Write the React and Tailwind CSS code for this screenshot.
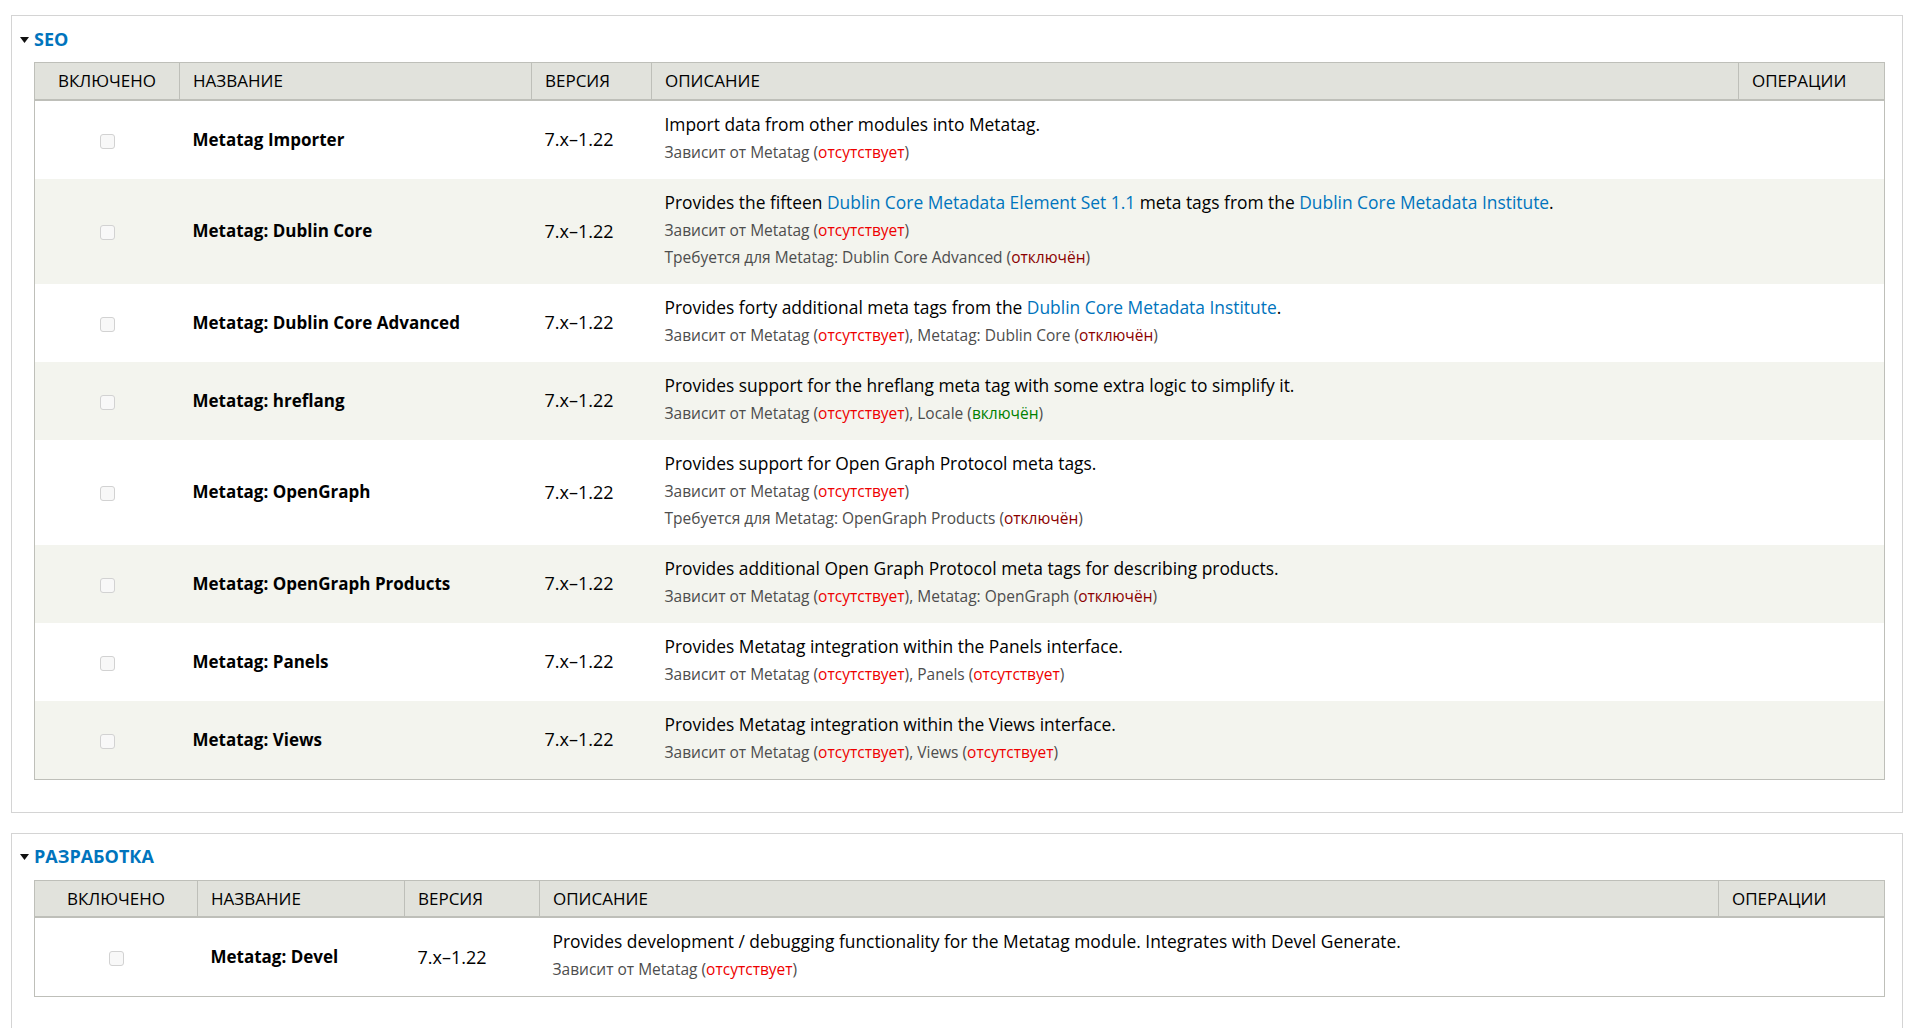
const RED = 'text-[#e00]';
const OFF = 'text-[#8b0000]';
const ON = 'text-[#008000]';

function A({ children }) {
  return <a className="text-[#0074bd]">{children}</a>;
}

function Dep({ label, state, cls }) {
  return (
    <>
      {label} (<span className={cls}>{state}</span>)
    </>
  );
}

const seo = [
  {
    name: 'Metatag Importer',
    desc: 'Import data from other modules into Metatag.',
    lines: [<Dep label="Зависит от Metatag" state="отсутствует" cls={RED} />],
  },
  {
    name: 'Metatag: Dublin Core',
    desc: (
      <>
        Provides the fifteen <A>Dublin Core Metadata Element Set 1.1</A> meta tags from the{' '}
        <A>Dublin Core Metadata Institute</A>.
      </>
    ),
    lines: [
      <Dep label="Зависит от Metatag" state="отсутствует" cls={RED} />,
      <Dep label="Требуется для Metatag: Dublin Core Advanced" state="отключён" cls={OFF} />,
    ],
  },
  {
    name: 'Metatag: Dublin Core Advanced',
    desc: (
      <>
        Provides forty additional meta tags from the <A>Dublin Core Metadata Institute</A>.
      </>
    ),
    lines: [
      <>
        <Dep label="Зависит от Metatag" state="отсутствует" cls={RED} />,{' '}
        <Dep label="Metatag: Dublin Core" state="отключён" cls={OFF} />
      </>,
    ],
  },
  {
    name: 'Metatag: hreflang',
    desc: 'Provides support for the hreflang meta tag with some extra logic to simplify it.',
    lines: [
      <>
        <Dep label="Зависит от Metatag" state="отсутствует" cls={RED} />,{' '}
        <Dep label="Locale" state="включён" cls={ON} />
      </>,
    ],
  },
  {
    name: 'Metatag: OpenGraph',
    desc: 'Provides support for Open Graph Protocol meta tags.',
    lines: [
      <Dep label="Зависит от Metatag" state="отсутствует" cls={RED} />,
      <Dep label="Требуется для Metatag: OpenGraph Products" state="отключён" cls={OFF} />,
    ],
  },
  {
    name: 'Metatag: OpenGraph Products',
    desc: 'Provides additional Open Graph Protocol meta tags for describing products.',
    lines: [
      <>
        <Dep label="Зависит от Metatag" state="отсутствует" cls={RED} />,{' '}
        <Dep label="Metatag: OpenGraph" state="отключён" cls={OFF} />
      </>,
    ],
  },
  {
    name: 'Metatag: Panels',
    desc: 'Provides Metatag integration within the Panels interface.',
    lines: [
      <>
        <Dep label="Зависит от Metatag" state="отсутствует" cls={RED} />,{' '}
        <Dep label="Panels" state="отсутствует" cls={RED} />
      </>,
    ],
  },
  {
    name: 'Metatag: Views',
    desc: 'Provides Metatag integration within the Views interface.',
    lines: [
      <>
        <Dep label="Зависит от Metatag" state="отсутствует" cls={RED} />,{' '}
        <Dep label="Views" state="отсутствует" cls={RED} />
      </>,
    ],
  },
];

const devel = [
  {
    name: 'Metatag: Devel',
    desc: 'Provides development / debugging functionality for the Metatag module. Integrates with Devel Generate.',
    lines: [<Dep label="Зависит от Metatag" state="отсутствует" cls={RED} />],
  },
];

function Checkbox() {
  return (
    <span className="inline-block h-[15px] w-[15px] rounded-[3px] border border-[#d2d2d2] bg-[#f8f8f8] align-middle" />
  );
}

function ModuleTable({ rows, widths }) {
  const th = 'h-[37px] border-r border-[#bebfb9] px-[13px] text-[17px] font-normal text-black';
  return (
    <table className="w-full table-fixed border border-[#bebfb9]">
      <colgroup>
        {widths.map((w, i) => (
          <col key={i} style={{ width: w }} />
        ))}
      </colgroup>
      <thead>
        <tr className="border-b-2 border-[#bebfb9] bg-[#e1e2dc]">
          <th className={th + ' text-center'}>ВКЛЮЧЕНО</th>
          <th className={th + ' text-left'}>НАЗВАНИЕ</th>
          <th className={th + ' text-left'}>ВЕРСИЯ</th>
          <th className={th + ' text-left'}>ОПИСАНИЕ</th>
          <th className="h-[37px] px-[13px] text-left text-[17px] font-normal text-black">ОПЕРАЦИИ</th>
        </tr>
      </thead>
      <tbody>
        {rows.map((r, i) => (
          <tr key={r.name} className={i % 2 ? 'bg-[#f3f4ee]' : 'bg-white'}>
            <td className="text-center align-middle">
              <Checkbox />
            </td>
            <td className="px-[13px] align-middle text-[17px] font-bold text-black">{r.name}</td>
            <td className="px-[13px] align-middle text-[18px] text-black">7.x–1.22</td>
            <td className="px-[13px] pt-[9px] pb-[13px] align-middle">
              <div className="text-[17.4px] leading-[29px] text-black">{r.desc}</div>
              {r.lines.map((l, j) => (
                <div key={j} className="text-[15.5px] leading-[27px] text-[#4d4d4d]">
                  {l}
                </div>
              ))}
            </td>
            <td />
          </tr>
        ))}
      </tbody>
    </table>
  );
}

function Fieldset({ title, children }) {
  return (
    <section className="border border-[#d4d4d4] pb-[32px] pl-[22px] pr-[18px]">
      <div className="-ml-[14px] flex h-[46px] items-center gap-[5px]">
        <svg width="9" height="6" viewBox="0 0 9 6" className="mt-[1px]">
          <path d="M0 0h9L4.5 6z" fill="#111" />
        </svg>
        <span className="text-[18px] font-bold text-[#0074bd]">{title}</span>
      </div>
      {children}
    </section>
  );
}

export default function App() {
  return (
    <div className="min-h-[1028px] bg-white pt-[15px] pl-[11px] pr-[17px] font-['Open_Sans',sans-serif]">
      <div className="flex flex-col gap-[20px]">
        <Fieldset title="SEO">
          <ModuleTable rows={seo} widths={[145, 352, 120, 1087, 146]} />
        </Fieldset>
        <Fieldset title="РАЗРАБОТКА">
          <ModuleTable rows={devel} widths={[163, 207, 135, 1179, 166]} />
        </Fieldset>
      </div>
    </div>
  );
}
